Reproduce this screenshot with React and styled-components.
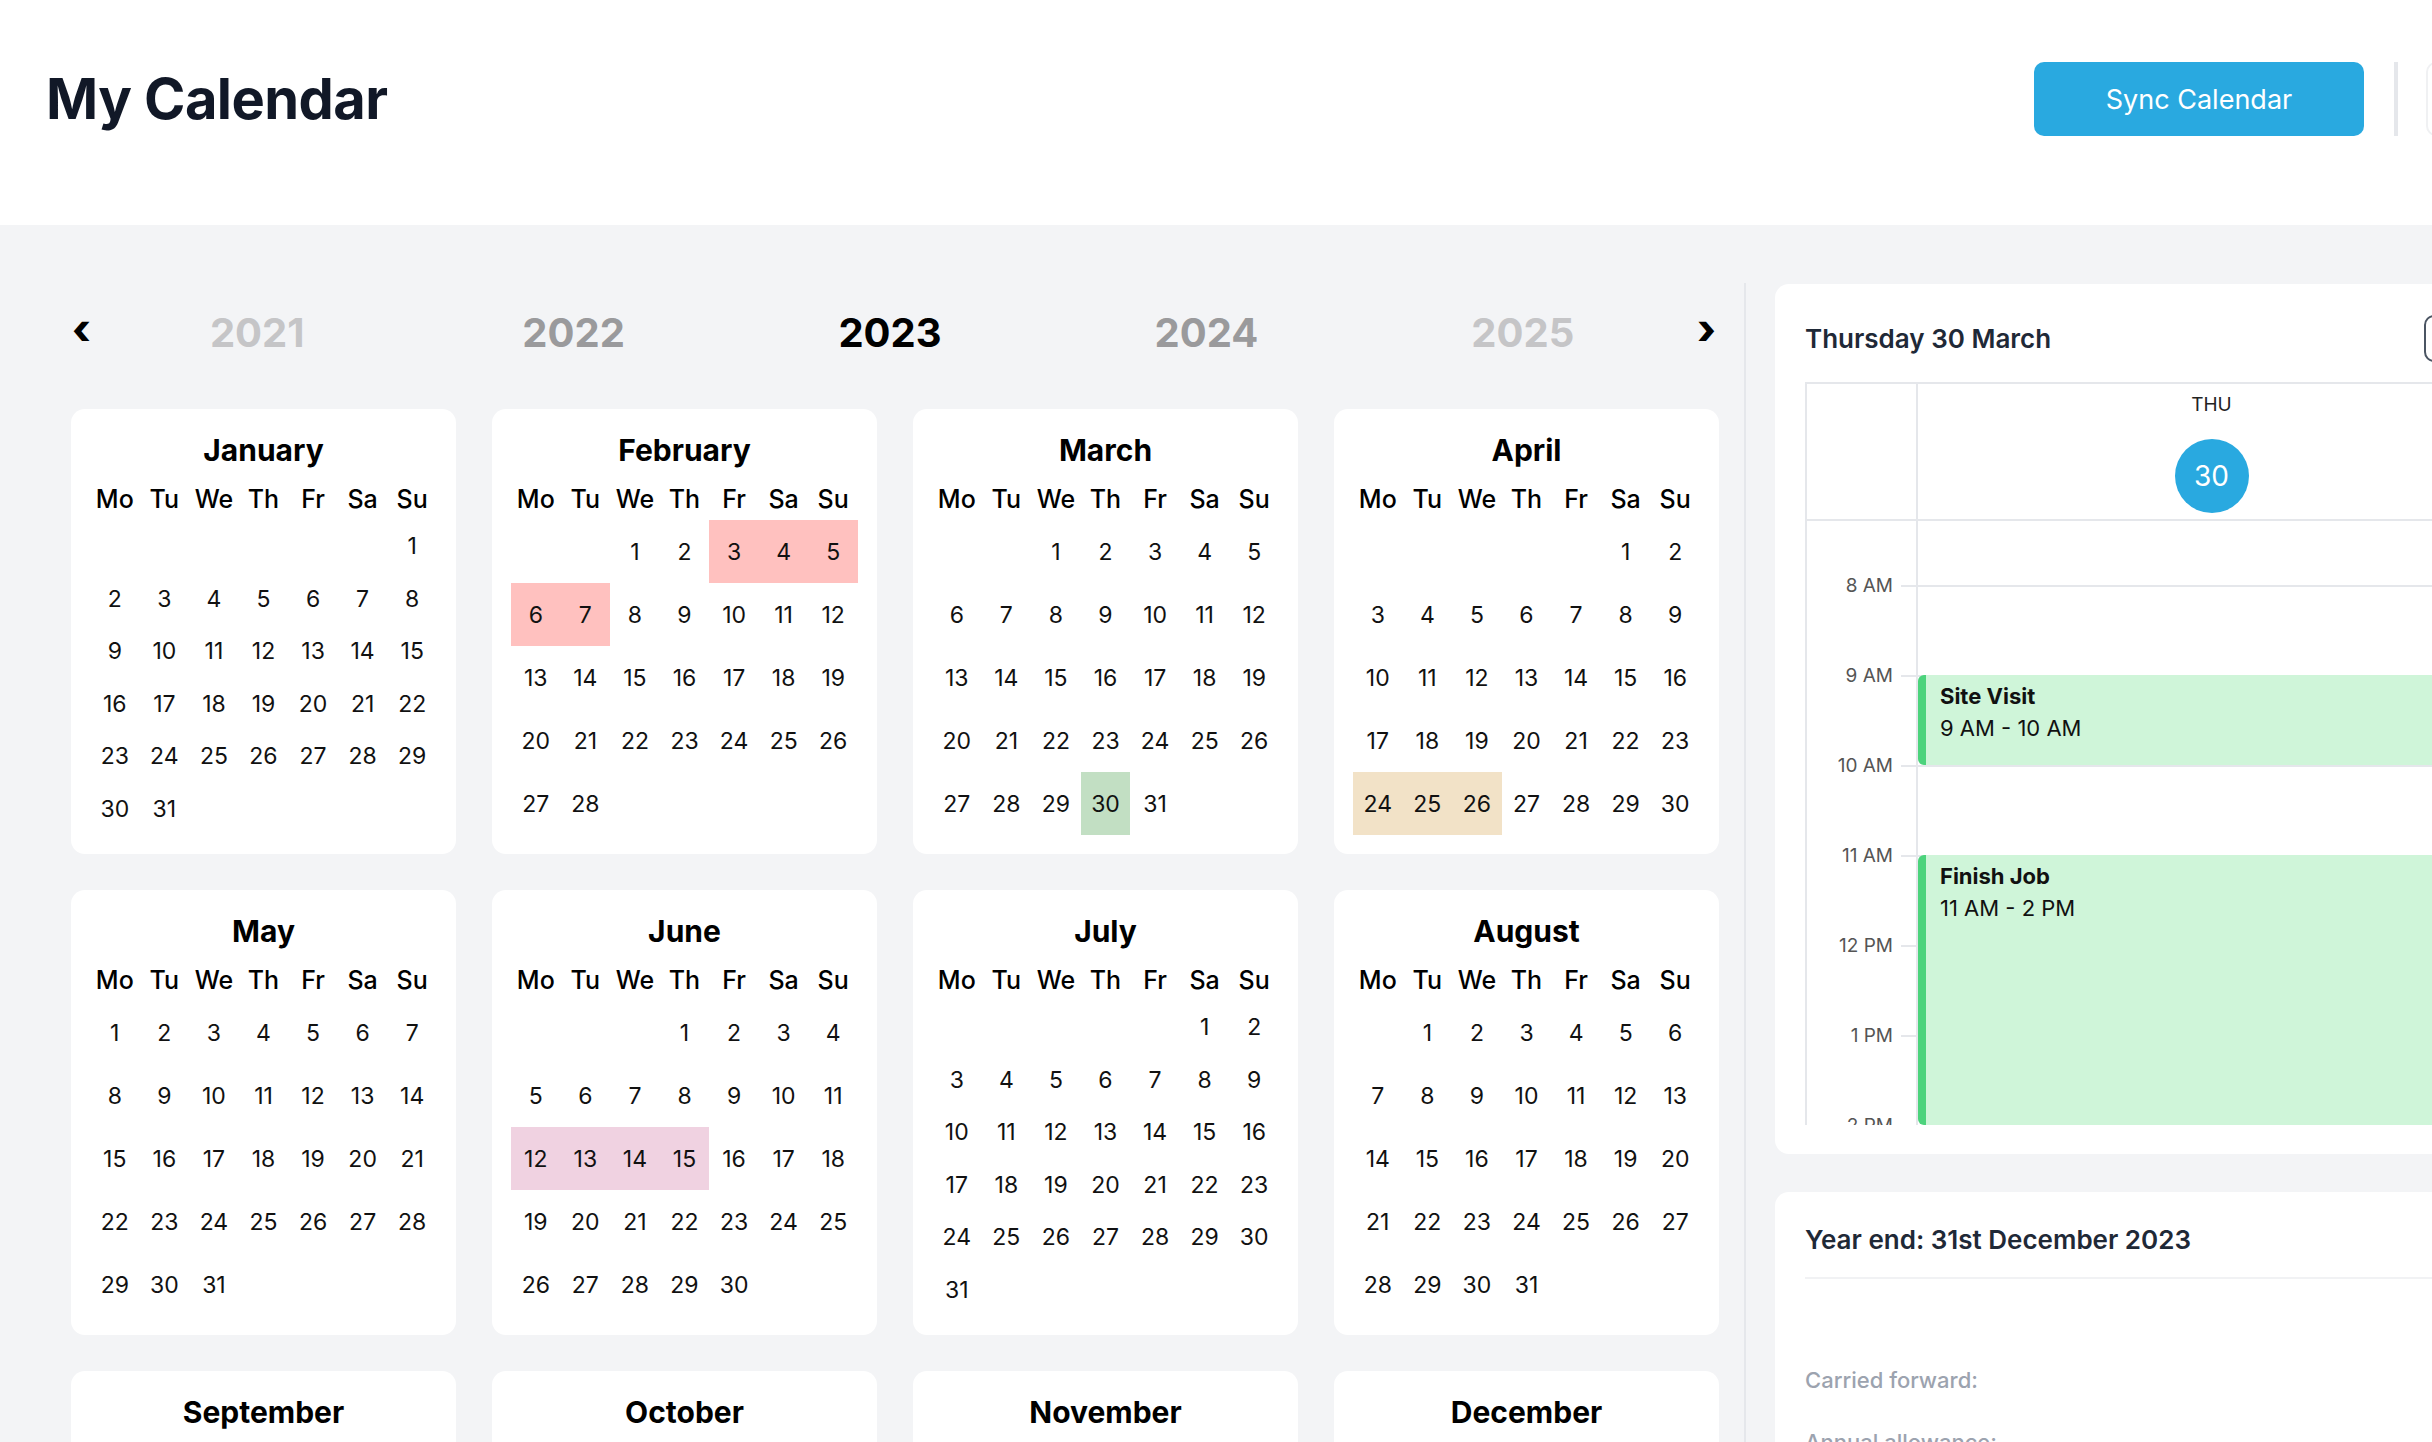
import React from 'react';
import styled, { createGlobalStyle } from 'styled-components';

const GlobalStyle = createGlobalStyle`
  html, body {
    margin: 0;
    padding: 0;
    overflow: hidden;
    background: #ffffff;
    font-family: Inter, "Noto Sans", "Liberation Sans", sans-serif;
    color: #111111;
  }
  * { box-sizing: border-box; }
`;

const Page = styled.div`
  width: 2540px;
  min-height: 1442px;
  background: #f3f4f6;
`;

const Header = styled.header`
  height: 225px;
  background: #ffffff;
  display: flex;
  align-items: flex-start;
  padding: 62px 0 0 46px;
`;

const PageTitle = styled.h1`
  margin: 0;
  height: 74px;
  line-height: 74px;
  font-size: 56px;
  font-weight: 700;
  color: #111827;
  letter-spacing: -0.01em;
`;

const HeaderActions = styled.div`
  margin-left: auto;
  display: flex;
  align-items: center;
  height: 74px;
`;

const SyncButton = styled.button`
  width: 330px;
  height: 74px;
  border: none;
  border-radius: 10px;
  background: #29a9e0;
  color: #ffffff;
  font-family: inherit;
  font-size: 27px;
  font-weight: 400;
`;

const Divider = styled.div`
  width: 4px;
  height: 74px;
  background: #e5e7eb;
  margin: 0 28px 0 30px;
`;

const GhostButton = styled.div`
  width: 114px;
  height: 74px;
  border: 2px solid #f0f1f3;
  border-radius: 10px;
  background: #ffffff;
`;

const Body = styled.div`
  display: flex;
  align-items: flex-start;
`;

const LeftColumn = styled.div`
  width: 1744px;
  flex-shrink: 0;
  padding: 77px 26px 0 71px;
`;

const YearNav = styled.div`
  display: grid;
  grid-template-columns: 28px repeat(5, 1fr) 37px;
  align-items: center;
  height: 60px;
  margin-bottom: 47px;
`;

const Arrow = styled.span`
  font-size: 42px;
  font-weight: 800;
  color: #000000;
  line-height: 1;
  justify-self: ${p => (p.$right ? 'end' : 'start')};
  padding: ${p => (p.$right ? '0 2px 6px 0' : '0 0 6px 1px')};
`;

const Year = styled.span`
  text-align: center;
  font-size: 40px;
  font-weight: 700;
  color: ${p => p.$tone};
`;

const MonthGrid = styled.div`
  display: grid;
  grid-template-columns: repeat(4, 385px);
  column-gap: 36px;
  row-gap: 36px;
`;

const MonthCard = styled.div`
  height: 445px;
  background: #ffffff;
  border-radius: 14px;
  padding: 19px;
`;

const MonthName = styled.div`
  height: 44px;
  line-height: 44px;
  text-align: center;
  font-size: 30px;
  font-weight: 700;
  color: #000000;
`;

const WeekRow = styled.div`
  display: grid;
  grid-template-columns: repeat(7, 1fr);
  height: 48px;
  padding-top: 6px;
`;

const WeekDay = styled.span`
  text-align: center;
  line-height: 42px;
  font-size: 25px;
  font-weight: 500;
  color: #000000;
`;

const DayGrid = styled.div`
  display: grid;
  grid-template-columns: repeat(7, 1fr);
  grid-template-rows: repeat(${p => p.$rows}, 1fr);
  height: 315px;
`;

const Day = styled.span`
  display: flex;
  align-items: center;
  justify-content: center;
  font-size: 23px;
  color: #111111;
  background: ${p => p.$bg || 'transparent'};
`;

const RightColumn = styled.div`
  margin-top: 58px;
  border-left: 2px solid #e5e7eb;
  padding: 1px 0 0 29px;
  min-height: 1200px;
`;

const Panel = styled.div`
  width: 730px;
  background: #ffffff;
  border-radius: 14px;
  padding: ${p => p.$pad};
  margin-bottom: 38px;
`;

const PanelHead = styled.div`
  display: flex;
  align-items: center;
  justify-content: space-between;
  height: 47px;
  padding-right: 34px;
`;

const PanelTitle = styled.h2`
  margin: 0;
  font-size: 26px;
  line-height: 30px;
  font-weight: 600;
  color: #1f2937;
`;

const IconBox = styled.div`
  width: 47px;
  height: 47px;
  border: 2px solid #4b5563;
  border-radius: 10px;
`;

const TimeGrid = styled.div`
  margin-top: 20px;
  border-top: 2px solid #e5e7eb;
  border-left: 2px solid #e5e7eb;
`;

const TimeHead = styled.div`
  display: grid;
  grid-template-columns: 111px 1fr;
  height: 137px;
  border-bottom: 2px solid #e5e7eb;
`;

const Gutter = styled.div`
  border-right: 2px solid #e5e7eb;
  position: relative;
`;

const DayHead = styled.div`
  display: flex;
  flex-direction: column;
  align-items: center;
  padding-top: 9px;
`;

const DayLabel = styled.span`
  font-size: 19px;
  line-height: 24px;
  color: #222222;
`;

const DayCircle = styled.span`
  margin-top: 22px;
  width: 74px;
  height: 74px;
  border-radius: 50%;
  background: #29a9e0;
  color: #ffffff;
  font-size: 28px;
  display: flex;
  align-items: center;
  justify-content: center;
`;

const ScrollBody = styled.div`
  height: 604px;
  overflow: hidden;
`;

const ScrollInner = styled.div`
  position: relative;
  margin-top: -26px;
`;

const HourRow = styled.div`
  display: grid;
  grid-template-columns: 111px 1fr;
  height: 90px;
`;

const HourLabel = styled.span`
  position: absolute;
  top: -11px;
  right: 23px;
  font-size: 19px;
  line-height: 24px;
  color: #555555;
  white-space: nowrap;
`;

const Tick = styled.span`
  position: absolute;
  top: 0;
  right: 0;
  width: 15px;
  height: 2px;
  background: #e5e7eb;
`;

const HourCell = styled.div`
  border-top: 2px solid #e5e7eb;
`;

const EventLayer = styled.div`
  position: absolute;
  top: 0;
  bottom: 0;
  left: 111px;
  right: 0;
`;

const Event = styled.div`
  position: absolute;
  left: 0;
  right: 0;
  background: #cff5d9;
  border-left: 8px solid #4cd37c;
  border-radius: 6px 0 0 6px;
  padding: 8px 14px;
`;

const EventTitle = styled.div`
  font-size: 22px;
  line-height: 26px;
  font-weight: 700;
  color: #111111;
`;

const EventTime = styled.div`
  margin-top: 6px;
  font-size: 22px;
  line-height: 26px;
  color: #111111;
`;

const Rule = styled.div`
  height: 2px;
  background: #f1f2f4;
  margin-top: 22px;
`;

const StatLabel = styled.div`
  margin-top: ${p => p.$gap}px;
  font-size: 22px;
  line-height: 26px;
  font-weight: 500;
  color: #9ca3af;
`;

const months = [
  { name: 'January', start: 6, days: 31 },
  { name: 'February', start: 2, days: 28, marks: { 3: '#ffc1bf', 4: '#ffc1bf', 5: '#ffc1bf', 6: '#ffc1bf', 7: '#ffc1bf' } },
  { name: 'March', start: 2, days: 31, marks: { 30: '#c2dfc3' } },
  { name: 'April', start: 5, days: 30, marks: { 24: '#f2e2c7', 25: '#f2e2c7', 26: '#f2e2c7' } },
  { name: 'May', start: 0, days: 31 },
  { name: 'June', start: 3, days: 30, marks: { 12: '#f0d2e1', 13: '#f0d2e1', 14: '#f0d2e1', 15: '#f0d2e1' } },
  { name: 'July', start: 5, days: 31 },
  { name: 'August', start: 1, days: 31 },
  { name: 'September', start: 4, days: 30 },
  { name: 'October', start: 6, days: 31 },
  { name: 'November', start: 2, days: 30 },
  { name: 'December', start: 4, days: 31 },
];

const weekDays = ['Mo', 'Tu', 'We', 'Th', 'Fr', 'Sa', 'Su'];

const years = [
  { label: '2021', tone: '#c5c5c7' },
  { label: '2022', tone: '#9a9a9c' },
  { label: '2023', tone: '#000000' },
  { label: '2024', tone: '#9a9a9c' },
  { label: '2025', tone: '#c5c5c7' },
];

const hours = ['7 AM', '8 AM', '9 AM', '10 AM', '11 AM', '12 PM', '1 PM', '2 PM', '3 PM'];

const events = [
  { title: 'Site Visit', time: '9 AM - 10 AM', start: 9, end: 10 },
  { title: 'Finish Job', time: '11 AM - 2 PM', start: 11, end: 14 },
];

const HOUR = 90;
const FIRST_HOUR = 7;

const Month = ({ month }) => {
  const cells = [];
  for (let i = 0; i < month.start; i++) cells.push(null);
  for (let d = 1; d <= month.days; d++) cells.push(d);
  const rows = Math.ceil(cells.length / 7);
  const marks = month.marks || {};

  return (
    <MonthCard>
      <MonthName>{month.name}</MonthName>
      <WeekRow>
        {weekDays.map(w => <WeekDay key={w}>{w}</WeekDay>)}
      </WeekRow>
      <DayGrid $rows={rows}>
        {cells.map((d, i) => (
          <Day key={i} $bg={d ? marks[d] : null}>{d || ''}</Day>
        ))}
      </DayGrid>
    </MonthCard>
  );
};

const DayView = () => (
  <Panel $pad="31px 0 29px 30px">
    <PanelHead>
      <PanelTitle>Thursday 30 March</PanelTitle>
      <IconBox />
    </PanelHead>
    <TimeGrid>
      <TimeHead>
        <Gutter />
        <DayHead>
          <DayLabel>THU</DayLabel>
          <DayCircle>30</DayCircle>
        </DayHead>
      </TimeHead>
      <ScrollBody>
        <ScrollInner>
          {hours.map((h, i) => (
            <HourRow key={h}>
              <Gutter>
                {i > 0 && <HourLabel>{h}</HourLabel>}
                {i > 0 && <Tick />}
              </Gutter>
              <HourCell />
            </HourRow>
          ))}
          <EventLayer>
            {events.map(ev => (
              <Event
                key={ev.title}
                style={{
                  top: (ev.start - FIRST_HOUR) * HOUR,
                  height: (ev.end - ev.start) * HOUR,
                }}
              >
                <EventTitle>{ev.title}</EventTitle>
                <EventTime>{ev.time}</EventTime>
              </Event>
            ))}
          </EventLayer>
        </ScrollInner>
      </ScrollBody>
    </TimeGrid>
  </Panel>
);

const YearEnd = () => (
  <Panel $pad="33px 0 40px 30px">
    <PanelTitle>Year end: 31st December 2023</PanelTitle>
    <Rule />
    <StatLabel $gap={88}>Carried forward:</StatLabel>
    <StatLabel $gap={36}>Annual allowance:</StatLabel>
  </Panel>
);

const App = () => (
  <>
    <GlobalStyle />
    <Page>
      <Header>
        <PageTitle>My Calendar</PageTitle>
        <HeaderActions>
          <SyncButton>Sync Calendar</SyncButton>
          <Divider />
          <GhostButton />
        </HeaderActions>
      </Header>
      <Body>
        <LeftColumn>
          <YearNav>
            <Arrow>‹</Arrow>
            {years.map(y => <Year key={y.label} $tone={y.tone}>{y.label}</Year>)}
            <Arrow $right>›</Arrow>
          </YearNav>
          <MonthGrid>
            {months.map(m => <Month key={m.name} month={m} />)}
          </MonthGrid>
        </LeftColumn>
        <RightColumn>
          <DayView />
          <YearEnd />
        </RightColumn>
      </Body>
    </Page>
  </>
);

export default App;
